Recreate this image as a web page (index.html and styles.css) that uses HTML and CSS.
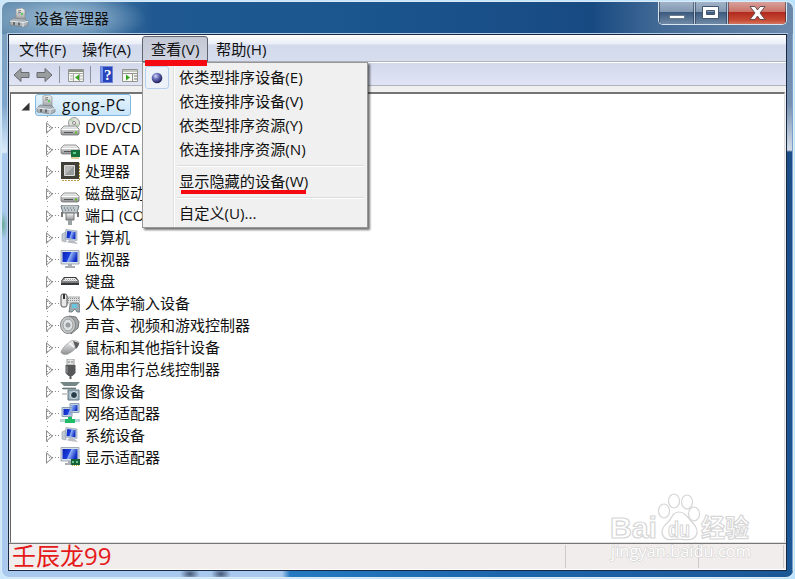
FILE: index.html
```html
<!DOCTYPE html>
<html lang="zh-CN">
<head>
<meta charset="utf-8">
<title>设备管理器</title>
<link rel="stylesheet" href="styles.css">
</head>
<body>
<svg class="defs" width="0" height="0">
  <defs>
    <linearGradient id="metal" x1="0" y1="0" x2="0" y2="1"><stop offset="0" stop-color="#f7f7f7"/><stop offset="1" stop-color="#8d9092"/></linearGradient>
    <linearGradient id="screen" x1="0" y1="0" x2="1" y2=".3"><stop offset="0" stop-color="#0a1fb0"/><stop offset=".5" stop-color="#1c3fe0"/><stop offset=".58" stop-color="#8fb0f6"/><stop offset="1" stop-color="#1230c4"/></linearGradient>
    <radialGradient id="ball" cx=".38" cy=".32" r=".7"><stop offset="0" stop-color="#d0d4f8"/><stop offset=".45" stop-color="#6468b4"/><stop offset="1" stop-color="#1c1c58"/></radialGradient>
    <symbol id="drive" viewBox="0 0 20 20"><path d="M1 11 4 8h12l3 3v5l-1 1H2l-1-1z" fill="url(#metal)" stroke="#777" stroke-width=".8"/><path d="M1.500 11.500h17" stroke="#fff"/><path d="M4 14.500h9" stroke="#555"/><path d="M15 13.500h2v2h-2z" fill="#5cc21c"/></symbol>
    <symbol id="pc" viewBox="0 0 20 20"><path d="m2 7 4-2v10l-4-1z" fill="#c3cad1" stroke="#9aa3ac" stroke-width=".7"/><path d="m6 2.500 11 1.500v9.500L5 12z" fill="#c5d1dd" stroke="#8495a8" stroke-width=".6"/><path d="m7.300 4 8.200 1v7.200L6.500 11z" fill="url(#screen)"/><path d="m9 13 5 .5 4 3.500-4-.5-7-1z" fill="#b8bcc2"/></symbol>
    <symbol id="monitor" viewBox="0 0 20 20"><path d="M1 1.500h18V15H1z" fill="#dae2e8" stroke="#8b9ba8" stroke-width=".8"/><path d="M2.500 3h15v10h-15z" fill="url(#screen)"/><path d="M8 15h4v2h3v2H5v-2h3z" fill="#a9afb4"/></symbol>
    <symbol id="host" viewBox="0 0 20 20"><path d="m7 1 6-1 3 2v10l-6 1-3-2z" fill="url(#metal)" stroke="#888" stroke-width=".6"/><path d="m9 3 3-.5M9 5l3-.5" stroke="#777"/><path d="M13 5v2" stroke="#3c3" stroke-width="1.500"/><path d="m1 13 3-3 12 1 3 3v3l-4 2-14-2z" fill="#aab3b9" stroke="#747d83" stroke-width=".7"/><path d="m1 13 13 1.500 5-1M14 14v5" stroke="#e5eaee" fill="none"/><path d="M5 14v3M10 14.500v3" stroke="#555" stroke-width="1.500"/></symbol>
  </defs>
</svg>

<div class="window">
  <header class="titlebar">
    <svg class="title-icon" width="20" height="20"><use href="#host"/></svg>
    <h1>设备管理器</h1>
    <div class="controls">
      <button class="min"><svg width="35" height="24"><path d="M10.500 14.500h15v3h-15z" fill="#fff" stroke="#53647a" stroke-width=".7"/></svg></button>
      <button class="max"><svg width="33" height="24"><path fill-rule="evenodd" d="M7.500 5.500h16v12h-16zM11.500 9.500v4h8v-4z" fill="#fff" stroke="#46566c"/></svg></button>
      <button class="close"><svg width="59" height="24"><path d="M22 5.500h5l2.500 3.500L32 5.500h5l-5 6.500 5 6.500h-5L29.500 15 27 18.500h-5l5-6.500z" fill="#fff" stroke="#60444a" stroke-width=".9"/></svg></button>
    </div>
  </header>

  <div class="middle">
    <div class="edge-left"></div>
    <main class="client">
      <nav class="menubar">
        <span class="m-file">文件(F)</span><span class="m-act">操作(A)</span><span class="m-view">查看(V)</span><span class="m-help">帮助(H)</span>
      </nav>
      <div class="toolbar">
        <svg width="134" height="22">
          <path d="m5 12 7-6.500v4h8v5h-8v4z" fill="#999da0" stroke="#686c70"/>
          <path d="m43 12-7-6.500v4h-8v5h8v4z" fill="#999da0" stroke="#686c70"/>
          <path d="M50.500 3v17M81.500 3v17" stroke="#8d929b"/>
          <path d="M59.500 6.500h15v12h-15z" fill="#f7f8f4" stroke="#92968c"/><path d="M60 8h14" stroke="#8e9489" stroke-width="2"/><path d="M60 10.500h14M64.500 10v8M70.500 10v8" stroke="#a6aba0"/><path d="M61 13h3M61 16h3M71 13h3M71 16h3" stroke="#acb0aa"/>
          <path d="m70 11.500-4 3 4 3z" fill="#36a51f"/>
          <path d="M91.500 3.500h12v16h-12z" fill="#2744bb" stroke="#6d85d4"/><path d="M93 4v15" stroke="#7893ed" stroke-width="2"/><text x="95" y="17" class="question">?</text>
          <path d="M113.500 6.500h15v12h-15z" fill="#f7f8f4" stroke="#92968c"/><path d="M114 8h14M114 10.500h14M123.500 10v8" stroke="#8e9489"/><path d="M125 13h3M125 16h3" stroke="#777"/><path d="m117 11.500 4 3-4 3z" fill="#36a51f"/>
        </svg>
      </div>
      <div class="gap"></div>

      <section class="tree">
        <div class="root"><svg class="open" width="9" height="9"><path d="M8.500.5v8h-8z" fill="#333"/></svg><div class="selected"><svg width="20" height="20"><use href="#host"/></svg><span>gong-PC</span></div></div>
        <ul>
          <li><i></i><svg width="20" height="20"><circle cx="14" cy="6" r="5.500" fill="#e2e2dc" stroke="#999"/><path d="m14 6-4-3 2-2zM14 6l5 2-2 2z" fill="#b2d3b0"/><circle cx="14" cy="6" r="1.500" fill="#fff" stroke="#888"/><use href="#drive" y="1"/></svg>DVD/CD</li>
          <li><i></i><svg width="20" height="20"><use href="#drive" y="-2"/><path d="M11 11h9v7h-9z" fill="#16703c"/><path d="M12 18v2m2-2v2m2-2v2m2-2v2" stroke="#baa33a"/><path d="M13 13h3v2h-3z" fill="#5fd08b"/></svg>IDE ATA</li>
          <li><i></i><svg width="20" height="20"><path d="M1 1h18v17H1z" fill="#404039"/><path d="M2 19.500h17M19.500 2v17" stroke="#b89b41" stroke-dasharray="2 1"/><path d="M4.500 4.500h10v10h-10z" fill="#b8b9b8" stroke="#ddd"/><path d="m5 14 9-9v9z" fill="#999c9c"/></svg>处理器</li>
          <li><i></i><svg width="20" height="20"><use href="#drive" y="2"/></svg>磁盘驱动</li>
          <li><i></i><svg width="20" height="20"><path d="m1 1 2-1h14l2 1-2 7H3z" fill="#c1c8cc" stroke="#6f797f"/><path d="M4 3h12M5 5h10" stroke="#55646e" stroke-dasharray="1 2"/><path d="M2 7v5m16-5v5" stroke="#777" stroke-width="2"/><path d="M6 8h8v7H6z" fill="url(#metal)" stroke="#777"/><path d="M10 15v5" stroke="#9aa1a5" stroke-width="4"/></svg>端口 (CO</li>
          <li><i></i><svg width="20" height="20"><use href="#pc"/></svg>计算机</li>
          <li><i></i><svg width="20" height="20"><use href="#monitor"/></svg>监视器</li>
          <li><i></i><svg width="20" height="20"><path d="m1 10 3-4h12l3 4v4H1z" fill="#36383a"/><path d="m2 10 3-3h10l3 3z" fill="#eee"/><path d="M4 8.500h12M3 10h14" stroke="#999" stroke-dasharray="1 1"/><path d="M1 11h18" stroke="#bbb"/></svg>键盘</li>
          <li><i></i><svg width="20" height="20"><path d="M7 4h13v6H7z" fill="#dfe2e2" stroke="#aaa"/><path d="M8 5.500h11M8 7.500h11" stroke="#888" stroke-dasharray="1 1"/><rect x="1" y="1" width="6" height="13" rx="2" fill="#e8e8e8" stroke="#555"/><path d="M4 1v5" stroke="#333" stroke-width="2"/><path d="m10 11 2-1h6l2 2v7h-3l-2-3-3 3h-3z" fill="#9aa8ad" stroke="#5b6a70" stroke-width=".7"/><path d="M12 11h5v4h-5z" fill="#67c5df"/></svg>人体学输入设备</li>
          <li><i></i><svg width="20" height="20"><path d="m9 1 7 1 3 5-1 6-7 6z" fill="#a2a6a8" stroke="#777"/><ellipse cx="8" cy="10" rx="7.500" ry="8.500" fill="#c6cacb" stroke="#818587"/><ellipse cx="8" cy="10" rx="5" ry="6" fill="#dfe2e2" stroke="#999"/><circle cx="8" cy="10" r="2.500" fill="#989d9f"/></svg>声音、视频和游戏控制器</li>
          <li><i></i><svg width="20" height="20"><path d="M1 15c1-4 7-9 10-11 2-1 8 0 8 2-1 4-7 9-11 11-3 1-7 0-7-2z" fill="url(#metal)" stroke="#858585" stroke-width=".6"/><path d="m13 4 6 2c0 2-1 4-3 6z" fill="#5b5e60"/><path d="m9 6 5 4" stroke="#f2f2f2" stroke-width="2"/></svg>鼠标和其他指针设备</li>
          <li><i></i><svg width="20" height="20"><path d="M7 0h7v6H7z" fill="#e5e7e7" stroke="#999"/><path d="M9 2v2m3-2v2" stroke="#777"/><path d="M5.500 6h10v8l-3 3h-4l-3-3z" fill="#555759"/><path d="M7 7v7" stroke="#9a9c9e"/><path d="M10.500 16v4" stroke="#555" stroke-width="2"/></svg>通用串行总线控制器</li>
          <li><i></i><svg width="20" height="20"><path d="M0 1h20l-4 4H4z" fill="#768788"/><path d="M3 6h13v3H3z" fill="#c8d0d2"/><path d="M2 7.500h14" stroke="#6d787b"/><path d="M8 9h11v10H8z" fill="#a5b9c4" stroke="#5f7682"/><circle cx="14" cy="14" r="3.500" fill="#263d4c" stroke="#e5eef2"/><path d="M2 13h6" stroke="#ccc" stroke-width="2"/></svg>图像设备</li>
          <li><i></i><svg width="20" height="20"><path d="M10 .5h9v9h-9zM2 4.500h10v9H2z" fill="#c4d2df" stroke="#8ba0b4"/><path d="M11.500 2h6v6h-6zM3.500 6h7v6h-7z" fill="url(#screen)"/><path d="M0 17.500h20" stroke="#b7d5d7" stroke-width="3"/><path d="M8 14h4v2h3v4H5v-4h3z" fill="#20bd69"/></svg>网络适配器</li>
          <li><i></i><svg width="20" height="20"><use href="#pc"/></svg>系统设备</li>
          <li><i></i><svg width="20" height="20"><use href="#monitor" y="-1"/><path d="M11 12h9v6h-9z" fill="#176338"/><path d="M12 18.500h7" stroke="#c7b449" stroke-dasharray="1 1"/><path d="M12 14h2v2h-2zM16 14h2v2h-2z" fill="#6ec191"/></svg>显示适配器</li>
        </ul>
      </section>
      <footer class="status"><span class="signature">壬辰龙99</span><div class="cell-a"></div><div class="cell-b"></div></footer>
    </main>
    <div class="edge-right"></div>
  </div>
  <div class="edge-bottom"></div>
</div>

<div class="popup">
  <div class="item"><span class="check"><svg width="12" height="12"><circle cx="6" cy="6" r="5.300" fill="url(#ball)"/></svg></span>依类型排序设备(E)</div>
  <div class="item">依连接排序设备(V)</div>
  <div class="item">依类型排序资源(Y)</div>
  <div class="item">依连接排序资源(N)</div>
  <hr>
  <div class="item">显示隐藏的设备(W)</div>
  <hr>
  <div class="item">自定义(U)...</div>
</div>
<div class="mark mark-menu"></div>
<div class="mark mark-item"></div>

<svg class="watermark" width="150" height="76">
  <g fill="#fff" stroke="#d6d6d6" stroke-width="1.200">
    <text x="2" y="45" class="wm-bai" textLength="47" lengthAdjust="spacingAndGlyphs">Bai</text>
    <ellipse cx="56" cy="18" rx="5.500" ry="7"/><ellipse cx="66" cy="8" rx="5.500" ry="7"/><ellipse cx="79" cy="9" rx="5.500" ry="7"/><ellipse cx="86" cy="21" rx="5.500" ry="7"/>
    <path d="M71 19c5 0 8 4 11 8 4 4 8 8 7 13-2 8-9 7-18 6-9 1-15 2-17-6 0-6 4-9 8-13 2-4 4-8 9-8z"/>
    <text x="60" y="44" class="wm-du" textLength="22" lengthAdjust="spacingAndGlyphs">du</text>
    <text x="93" y="44" class="wm-cn" textLength="48" lengthAdjust="spacingAndGlyphs">经验</text>
  </g>
  <text x="3" y="64" class="wm-url" textLength="140" lengthAdjust="spacingAndGlyphs">jingyan.baidu.com</text>
</svg>
</body>
</html>
```
FILE: styles.css
```css
* { box-sizing: border-box; }
body {
  margin: 0;
  width: 795px;
  height: 579px;
  padding: 2px;
  overflow: hidden;
  position: relative;
  background: linear-gradient(90deg, #cce7fc, #bde4ff);
  font: 15px/22px "Open Sans", "Noto Sans CJK SC", sans-serif;
  color: #111;
}
.defs { position: absolute; }
.window {
  height: 575px;
  display: flex;
  flex-direction: column;
  border-radius: 7px;
  overflow: hidden;
  box-shadow: 0 0 0 1px #dceaf4;
}
.titlebar {
  height: 32px;
  flex: none;
  display: flex;
  align-items: flex-start;
  padding-left: 6px;
  background:
    radial-gradient(ellipse 80px 25px at 65px 16px, rgba(190, 214, 232, .75), transparent),
    linear-gradient(90deg, #648daf 0, #4d7da6 90px, #205991 150px, #1b568f 350px, #184a82 590px, #416995 655px, #6b89ab 100%);
}
.title-icon { margin: 6px 0 0 1px; }
h1 { margin: 5px 0 0 5px; font: inherit; white-space: nowrap; }
.controls {
  display: flex;
  height: 24px;
  margin: -1px 6px 0 auto;
  border: 1px solid #dae5f0;
  border-top: 0;
  border-radius: 0 0 5px 5px;
  overflow: hidden;
  box-shadow: inset 0 0 0 1px #283e5c;
}
.controls button {
  padding: 0;
  border: 0;
  height: 24px;
  display: block;
  background: linear-gradient(#a5b6ca, #8298b1 45%, #3c5a7e 47%, #748da9);
  border-right: 1px solid #bbcbdc;
  box-shadow: inset 0 0 0 1px rgba(25, 42, 66, .5);
}
.controls svg { display: block; }
.controls .min { width: 36px; }
.controls .max { width: 33px; }
.controls .close { width: 58px; border-right: 0; background: linear-gradient(#d9a6a0, #c97268 45%, #b02a1e 47%, #c84a33 80%, #d5836d); }
.middle { flex: 1; display: flex; min-height: 0; }
.edge-left { width: 6px; background: radial-gradient(ellipse 5px 14px at 1px 191px, #69a996, transparent), linear-gradient(#7d9fc0, #7da5cb 70px, #cae0f4 110px, #dceaf8 118px, #a9c9ed 120px, #a8c8ee); }
.edge-right { width: 6px; background: linear-gradient(#6c89ac 0, #7792b1 70px, #d3dce6 116px, #1c4d87 118px, #1c5796); border-right: 1px solid #7aa1c8; }
.edge-bottom {
  height: 6px;
  flex: none;
  background:
    radial-gradient(ellipse 10px 6px at 188px 3px, #435775, transparent),
    radial-gradient(ellipse 10px 6px at 219px 3px, #435775, transparent),
    linear-gradient(90deg, #a8c8ee 280px, #247ac0 288px, #1d66ac 500px, #1c5796);
}
.client {
  flex: 1;
  display: flex;
  flex-direction: column;
  border: 1px solid #172944;
  background: #f0f0f0;
  box-shadow: 0 0 0 1px #b8cee7;
}
.menubar {
  height: 27px;
  flex: none;
  display: flex;
  background: linear-gradient(#fff, #e9edf7 9px, #d3daec 10px, #d6dded);
  border-bottom: 1px solid #afb2bc;
  line-height: 28px;
  white-space: nowrap;
}
.m-file { margin-left: 10px; width: 63px; }
.m-act { width: 60px; }
.m-view {
  width: 66px;
  height: 26px;
  margin: 1px 0 0;
  padding-left: 8px;
  line-height: 25px;
  background: linear-gradient(#c3c8d4, #ced3df);
  border: 1px solid #60646e;
  border-radius: 3px 3px 0 0;
}
.m-help { margin-left: 8px; }
.menubar, .item { font-size: 15.200px; }
.toolbar { height: 24px; flex: none; border-top: 1px solid #fff; border-bottom: 1px solid #adb2bc; background: linear-gradient(#d2d9eb, #e0e4f5); }
.toolbar svg { display: block; }
.question { font: bold 15px "Liberation Serif", serif; fill: #fff; }
.gap { height: 6px; flex: none; }
.tree {
  flex: 1;
  margin: 0 1px;
  min-height: 0;
  background: #fff;
  border-top: 2px solid #747474;
  border-left: 1px solid #666;
  border-right: 1px solid #ddd;
  border-bottom: 1px solid #ddd;
}
.root { display: flex; height: 22px; padding: 0 0 0 10px; }
.open { margin: 8px 5px 0 0; }
.selected {
  display: flex;
  width: 96px;
  height: 22px;
  border: 1px solid #83b8dc;
  border-radius: 3px;
  background: linear-gradient(#e5f4fd, #c9e5f9);
  white-space: nowrap;
}
.selected span { margin-left: 6px; line-height: 20px; font-size: 15.500px; letter-spacing: .6px; }
.tree ul {
  list-style: none;
  margin: 0;
  padding: 0 0 0 35px;
  background: repeating-linear-gradient(#999 0 1px, transparent 1px 5px) 36px 0 / 1px 340px no-repeat;
}
.tree li { height: 22px; display: flex; white-space: nowrap; }
.tree li i {
  width: 14px;
  height: 22px;
  background: linear-gradient(90deg, #888 1px, transparent 1px 3px) 9px 11px / 3px 1px repeat-x;
  background-clip: content-box;
}
.tree li i::before {
  content: "";
  display: block;
  width: 8px;
  height: 12px;
  margin: 6px 0 0;
  background: #8f8f8f;
  clip-path: polygon(evenodd, 0 0, 7px 6px, 0 12px, 0 0, 1px 2px, 5.500px 6px, 1px 10px, 1px 2px);
}
.tree li svg { flex: none; margin: 1px 5px 0 0; }
.status { height: 27px; flex: none; display: flex; position: relative; border-top: 1px solid #777; border-bottom: 1px solid #fff; background: #f0edec; }
.signature { width: 556px; margin-left: 3px; color: #e61919; font-size: 24px; line-height: 23px; white-space: nowrap; }
.cell-a, .cell-b { height: 23px; margin-top: 1px; border-left: 1px solid #ccc; }
.cell-a { width: 133px; margin-left: -3px; }
.cell-b { width: 86px; border-right: 1px solid #ccc; }
.popup {
  position: absolute;
  left: 142px;
  top: 62px;
  width: 226px;
  height: 166px;
  padding: 3px 2px;
  border: 1px solid #979797;
  background: linear-gradient(90deg, transparent 30px, #dedede 30px 31px, #fff 31px 32px, transparent 32px) #f0f0f0;
  box-shadow: 2px 2px 2px rgba(0, 0, 0, .55);
}
.item { height: 24px; padding-left: 34px; line-height: 22px; white-space: nowrap; position: relative; }
.check {
  position: absolute;
  left: 0;
  top: 0;
  width: 24px;
  height: 23px;
  border: 1px solid #b4d0ef;
  border-radius: 3px;
  background: #edf2f8;
}
.check svg { display: block; margin: 5px; }
.popup hr { height: 2px; margin: 3px 1px 3px 32px; border: 0; border-top: 1px solid #dcdcdc; border-bottom: 1px solid #fff; }
.mark { position: absolute; background: #f50a12; }
.mark-menu { left: 145px; top: 60px; width: 62px; height: 6px; }
.mark-item { left: 181px; top: 190px; width: 125px; height: 4px; }
.watermark { position: absolute; left: 608px; top: 493px; }
.wm-bai, .wm-du { font: bold 30px "Liberation Sans", sans-serif; }
.wm-du { font-size: 22px; }
.wm-cn { font: bold 25px "Noto Sans CJK SC", sans-serif; }
.wm-url { font: 17px "Open Sans", sans-serif; fill: #fff; stroke: #d0d0d0; stroke-width: 1.200px; paint-order: stroke; }
```
